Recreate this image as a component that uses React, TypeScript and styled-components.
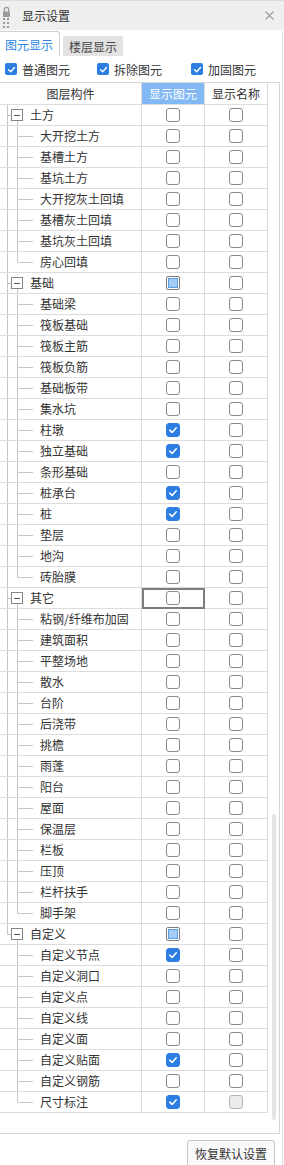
import React from 'react';
import styled, { createGlobalStyle, css } from 'styled-components';

type CheckState = 'off' | 'on' | 'partial' | 'disabled';

interface Group {
  name: string;
  show: CheckState;
  focus?: boolean;
  items: string[];
  checked?: string[];
}

const groups: Group[] = [
  {
    name: '土方',
    show: 'off',
    items: ['大开挖土方', '基槽土方', '基坑土方', '大开挖灰土回填', '基槽灰土回填', '基坑灰土回填', '房心回填'],
  },
  {
    name: '基础',
    show: 'partial',
    items: ['基础梁', '筏板基础', '筏板主筋', '筏板负筋', '基础板带', '集水坑', '柱墩', '独立基础', '条形基础', '桩承台', '桩', '垫层', '地沟', '砖胎膜'],
    checked: ['柱墩', '独立基础', '桩承台', '桩'],
  },
  {
    name: '其它',
    show: 'off',
    focus: true,
    items: ['粘钢/纤维布加固', '建筑面积', '平整场地', '散水', '台阶', '后浇带', '挑檐', '雨蓬', '阳台', '屋面', '保温层', '栏板', '压顶', '栏杆扶手', '脚手架'],
  },
  {
    name: '自定义',
    show: 'partial',
    items: ['自定义节点', '自定义洞口', '自定义点', '自定义线', '自定义面', '自定义贴面', '自定义钢筋', '尺寸标注'],
    checked: ['自定义节点', '自定义贴面', '尺寸标注'],
  },
];

const GlobalStyle = createGlobalStyle`
  html, body {
    margin: 0;
    padding: 0;
    background: #fff;
  }
  body {
    font-family: "Noto Sans CJK SC", "Noto Sans", sans-serif;
    font-size: 12px;
    color: #333;
  }
  * {
    box-sizing: border-box;
  }
`;

const Window = styled.div`
  width: 284px;
  height: 1165px;
  overflow: hidden;
  display: flex;
  flex-direction: column;
  background: #fff;
`;

const TitleBar = styled.div`
  height: 30px;
  flex-shrink: 0;
  display: flex;
  align-items: center;
  background: #efefef;
  border-top: 1px solid #dcdcdc;
  padding: 0 10px 0 2px;
`;

const Grip = styled.svg`
  width: 8px;
  height: 24px;
  flex-shrink: 0;
`;

const Title = styled.div`
  flex: 1;
  margin-left: 12px;
  font-size: 12px;
  line-height: 16px;
  color: #333;
`;

const CloseIcon = styled.svg`
  width: 9px;
  height: 9px;
`;

const Body = styled.div`
  flex: 1;
  display: flex;
  flex-direction: column;
  margin-right: 1px;
  border-right: 1px solid #dedede;
`;

const Tabs = styled.div`
  display: flex;
  align-items: flex-end;
  height: 25px;
  margin-top: 1px;
`;

const Tab = styled.div<{ $active?: boolean }>`
  width: 60px;
  display: flex;
  align-items: center;
  padding-left: 5px;
  font-size: 12px;
  ${(p) =>
    p.$active
      ? css`
          height: 25px;
          color: #2b88e4;
          background: #fff;
          border-top: 1px solid #cfcfcf;
          border-right: 1px solid #cfcfcf;
          border-radius: 0 3px 0 0;
        `
      : css`
          height: 20px;
          margin-left: 3px;
          padding-left: 6px;
          color: #444;
          background: #e2e2e2;
          border-radius: 2px 2px 0 0;
        `}
`;

const FilterRow = styled.div`
  display: flex;
  height: 18px;
  margin: 4px 0 4px;
  padding-left: 5px;
`;

const FilterItem = styled.label<{ $w: number }>`
  width: ${(p) => p.$w}px;
  display: flex;
  align-items: center;
  gap: 5px;
  font-size: 12px;
  color: #333;
`;

const SmallCheck = styled.span`
  width: 12px;
  height: 12px;
  border-radius: 2px;
  background: #2d7ee3;
  display: flex;
  align-items: center;
  justify-content: center;
`;

const Panel = styled.div`
  width: 280px;
  height: 1052px;
  flex-shrink: 0;
  display: flex;
  border-top: 1px solid #d6d6d6;
  border-right: 1px solid #d6d6d6;
  border-bottom: 1px solid #d6d6d6;
`;

const Table = styled.div`
  width: 268px;
  display: flex;
  flex-direction: column;
`;

const Row = styled.div<{ $h: number }>`
  display: flex;
  height: ${(p) => p.$h}px;
`;

const Cell = styled.div<{ $w: number; $head?: boolean; $focus?: boolean }>`
  width: ${(p) => p.$w}px;
  height: 100%;
  display: flex;
  align-items: center;
  justify-content: center;
  border-right: 1px solid #dcdcdc;
  border-bottom: 1px solid #dcdcdc;
  font-size: 12px;
  color: #333;
  ${(p) =>
    p.$head &&
    css`
      background: #82b9f4;
      color: #fff;
    `}
  ${(p) =>
    p.$focus &&
    css`
      outline: 2px solid #7d7d7d;
      outline-offset: -2px;
    `}
`;

const NameCell = styled.div`
  width: 142px;
  height: 100%;
  display: flex;
  align-items: center;
  border-right: 1px solid #dcdcdc;
  border-bottom: 1px solid #dcdcdc;
  font-size: 12px;
  color: #333;
  white-space: nowrap;
  overflow: hidden;
`;

const Gutter = styled.svg`
  flex-shrink: 0;
  align-self: flex-start;
`;

const Label = styled.span<{ $indent: number }>`
  margin-left: ${(p) => p.$indent}px;
  line-height: 16px;
`;

const Box = styled.span<{ $state: CheckState }>`
  width: 14px;
  height: 14px;
  border-radius: 3px;
  display: flex;
  align-items: center;
  justify-content: center;
  border: 1px solid #8a8a8a;
  background: #fff;
  ${(p) =>
    p.$state === 'on' &&
    css`
      border-color: #2d7ee3;
      background: #2d7ee3;
    `}
  ${(p) =>
    p.$state === 'disabled' &&
    css`
      border-color: #b4b4b4;
      background: #ececec;
    `}
  ${(p) =>
    p.$state === 'partial' &&
    css`
      border-color: #7a7a7a;
      border-radius: 2px;
    `}
`;

const PartialFill = styled.span`
  width: 10px;
  height: 10px;
  background: #a3cdf8;
  border: 1px solid #5c9ce2;
`;

const ScrollTrack = styled.div`
  width: 11px;
  display: flex;
  flex-direction: column;
`;

const Thumb = styled.div`
  width: 4px;
  height: 306px;
  margin: 731px 0 0 4px;
  border-radius: 2px;
  background: #e4e4e4;
`;

const Footer = styled.div`
  display: flex;
  justify-content: flex-end;
  padding: 6px 7px 0 0;
`;

const ResetButton = styled.button`
  width: 88px;
  height: 27px;
  padding: 0;
  border: 1px solid #c4c4c4;
  border-radius: 3px;
  background: #fafafa;
  font-family: "Noto Sans CJK SC", sans-serif;
  font-size: 12px;
  color: #333;
`;

const Tick: React.FC<{ size: number }> = ({ size }) => (
  <svg width={size} height={size} viewBox="0 0 14 14">
    <polyline points="3.2,7.2 6,9.8 10.8,4.4" fill="none" stroke="#fff" strokeWidth="1.8" strokeLinecap="round" strokeLinejoin="round" />
  </svg>
);

const CheckBox: React.FC<{ state: CheckState }> = ({ state }) => (
  <Box $state={state}>
    {state === 'on' && <Tick size={12} />}
    {state === 'partial' && <PartialFill />}
  </Box>
);

const LINE = '#c6c6c6';

interface TreeProps {
  kind: 'group' | 'child';
  lastGroup: boolean;
  lastChild?: boolean;
}

const TreeLines: React.FC<TreeProps> = ({ kind, lastGroup, lastChild }) => {
  const w = kind === 'group' ? 28 : 38;
  return (
    <Gutter width={w} height={20}>
      {kind === 'group' ? (
        <>
          <line x1="7.5" y1="0" x2="7.5" y2={lastGroup ? 10.5 : 20} stroke={LINE} />
          <line x1="7.5" y1="10.5" x2="11" y2="10.5" stroke={LINE} />
          <line x1="17.5" y1="16" x2="17.5" y2="20" stroke={LINE} />
          <rect x="11.5" y="4.5" width="11" height="11" fill="#fff" stroke="#858585" />
          <line x1="14" y1="10.5" x2="20" y2="10.5" stroke="#555" />
        </>
      ) : (
        <>
          {!lastGroup && <line x1="7.5" y1="0" x2="7.5" y2="20" stroke={LINE} />}
          <line x1="17.5" y1="0" x2="17.5" y2={lastChild ? 10.5 : 20} stroke={LINE} />
          <line x1="17.5" y1="10.5" x2="33" y2="10.5" stroke={LINE} />
        </>
      )}
    </Gutter>
  );
};

const App: React.FC = () => {
  return (
    <>
      <GlobalStyle />
      <Window>
        <TitleBar>
          <Grip viewBox="0 0 8 24">
            <path d="M2.3 8V5.6a2.2 2.2 0 0 1 4.4 0V8" fill="none" stroke="#9a9a9a" strokeWidth="1.3" />
            <rect x="1" y="7.5" width="7" height="5.5" rx="0.8" fill="#9a9a9a" />
            {[15, 19, 23].map((y) => (
              <React.Fragment key={y}>
                <rect x="1" y={y - 1} width="2" height="2" fill="#9a9a9a" />
                <rect x="5" y={y - 1} width="2" height="2" fill="#9a9a9a" />
              </React.Fragment>
            ))}
          </Grip>
          <Title>显示设置</Title>
          <CloseIcon viewBox="0 0 9 9">
            <path d="M0.5 0.5L8.5 8.5M8.5 0.5L0.5 8.5" stroke="#9b9b9b" strokeWidth="1.1" />
          </CloseIcon>
        </TitleBar>
        <Body>
          <Tabs>
            <Tab $active>图元显示</Tab>
            <Tab>楼层显示</Tab>
          </Tabs>
          <FilterRow>
            {[
              ['普通图元', 92],
              ['拆除图元', 94],
              ['加固图元', 80],
            ].map(([label, w]) => (
              <FilterItem key={label as string} $w={w as number}>
                <SmallCheck>
                  <Tick size={11} />
                </SmallCheck>
                {label}
              </FilterItem>
            ))}
          </FilterRow>
          <Panel>
            <Table>
              <Row $h={22}>
                <Cell $w={142}>图层构件</Cell>
                <Cell $w={63} $head>
                  显示图元
                </Cell>
                <Cell $w={63}>显示名称</Cell>
              </Row>
              {groups.map((g, gi) => {
                const lastGroup = gi === groups.length - 1;
                return (
                  <React.Fragment key={g.name}>
                    <Row $h={21}>
                      <NameCell>
                        <TreeLines kind="group" lastGroup={lastGroup} />
                        <Label $indent={2}>{g.name}</Label>
                      </NameCell>
                      <Cell $w={63} $focus={g.focus}>
                        <CheckBox state={g.show} />
                      </Cell>
                      <Cell $w={63}>
                        <CheckBox state="off" />
                      </Cell>
                    </Row>
                    {g.items.map((item, ii) => {
                      const lastChild = ii === g.items.length - 1;
                      const on = g.checked?.includes(item);
                      return (
                        <Row $h={21} key={item}>
                          <NameCell>
                            <TreeLines kind="child" lastGroup={lastGroup} lastChild={lastChild} />
                            <Label $indent={2}>{item}</Label>
                          </NameCell>
                          <Cell $w={63}>
                            <CheckBox state={on ? 'on' : 'off'} />
                          </Cell>
                          <Cell $w={63}>
                            <CheckBox state={lastGroup && lastChild ? 'disabled' : 'off'} />
                          </Cell>
                        </Row>
                      );
                    })}
                  </React.Fragment>
                );
              })}
            </Table>
            <ScrollTrack>
              <Thumb />
            </ScrollTrack>
          </Panel>
          <Footer>
            <ResetButton>恢复默认设置</ResetButton>
          </Footer>
        </Body>
      </Window>
    </>
  );
};

export default App;
